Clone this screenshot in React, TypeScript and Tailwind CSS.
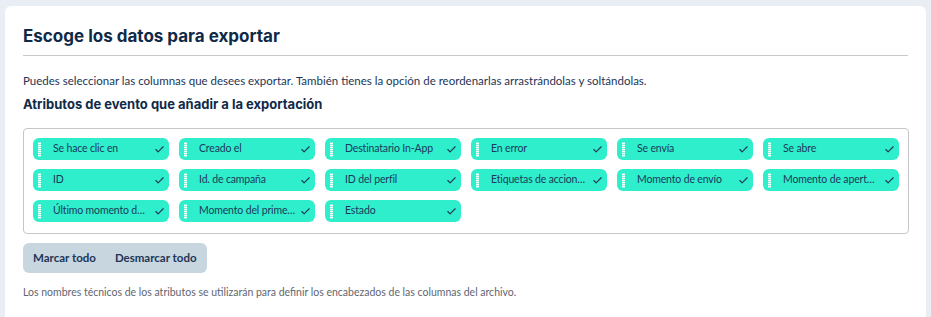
import { Check } from 'lucide-react'

const attrs = [
  'Se hace clic en',
  'Creado el',
  'Destinatario In-App',
  'En error',
  'Se envía',
  'Se abre',
  'ID',
  'Id. de campaña',
  'ID del perfil',
  'Etiquetas de acciones de la notificación',
  'Momento de envío',
  'Momento de apertura',
  'Último momento de clic',
  'Momento del primer clic',
  'Estado',
]

function Handle() {
  return (
    <span className="flex h-[15px] w-[3px] shrink-0 flex-col justify-between bg-white/40 py-px">
      {Array.from({ length: 7 }).map((_, i) => (
        <span key={i} className="h-px w-[3px] bg-white" />
      ))}
    </span>
  )
}

function Chip({ label }: { label: string }) {
  return (
    <div className="flex h-[22px] items-center rounded-[6px] bg-[#2eeecb] pl-[5px] pr-[4px] text-[#1d3a5c]">
      <Handle />
      <span className="ml-[12px] min-w-0 flex-1 truncate text-[10.5px] tracking-[-0.15px]">{label}</span>
      <Check className="ml-[4px] h-[11px] w-[11px] shrink-0" strokeWidth={2.5} />
    </div>
  )
}

export default function App() {
  return (
    <div
      className="min-h-[317px] bg-[#e9eef5] pt-[6px] pl-[5px] pr-[5px]"
      style={{ fontFamily: 'Lato, "Noto Sans", sans-serif' }}
    >
      <div className="h-[311px] w-[921px] rounded-t-[6px] bg-white px-[18px] pt-[19px]">
        <h1
          className="border-b border-[#c7c9cc] pb-[8px] text-[17px] font-bold leading-[22px] text-[#0f2a48]"
          style={{ fontFamily: 'Inter, sans-serif' }}
        >
          Escoge los datos para exportar
        </h1>
        <p className="mt-[18px] text-[11.5px] leading-[14px] text-[#1d3556]">
          Puedes seleccionar las columnas que desees exportar. También tienes la opción de reordenarlas arrastrándolas y soltándolas.
        </p>
        <h2
          className="mt-[8px] text-[13px] font-bold leading-[16px] text-[#0f2a48]"
          style={{ fontFamily: 'Inter, sans-serif' }}
        >
          Atributos de evento que añadir a la exportación
        </h2>
        <div className="mt-[16px] grid h-[106px] w-[886px] grid-cols-6 content-start gap-x-[10px] gap-y-[9px] rounded-[4px] border border-[#c4c6c9] p-[9px]">
          {attrs.map(a => (
            <Chip key={a} label={a} />
          ))}
        </div>
        <div className="mt-[9px] inline-flex h-[30px] items-center gap-[19px] rounded-[6px] bg-[#c8d6e0] px-[10px] text-[11.5px] font-bold text-[#1d3556]">
          <button>Marcar todo</button>
          <button>Desmarcar todo</button>
        </div>
        <p className="mt-[12px] text-[10.5px] leading-[14px] text-[#5f6670]">
          Los nombres técnicos de los atributos se utilizarán para definir los encabezados de las columnas del archivo.
        </p>
      </div>
    </div>
  )
}
